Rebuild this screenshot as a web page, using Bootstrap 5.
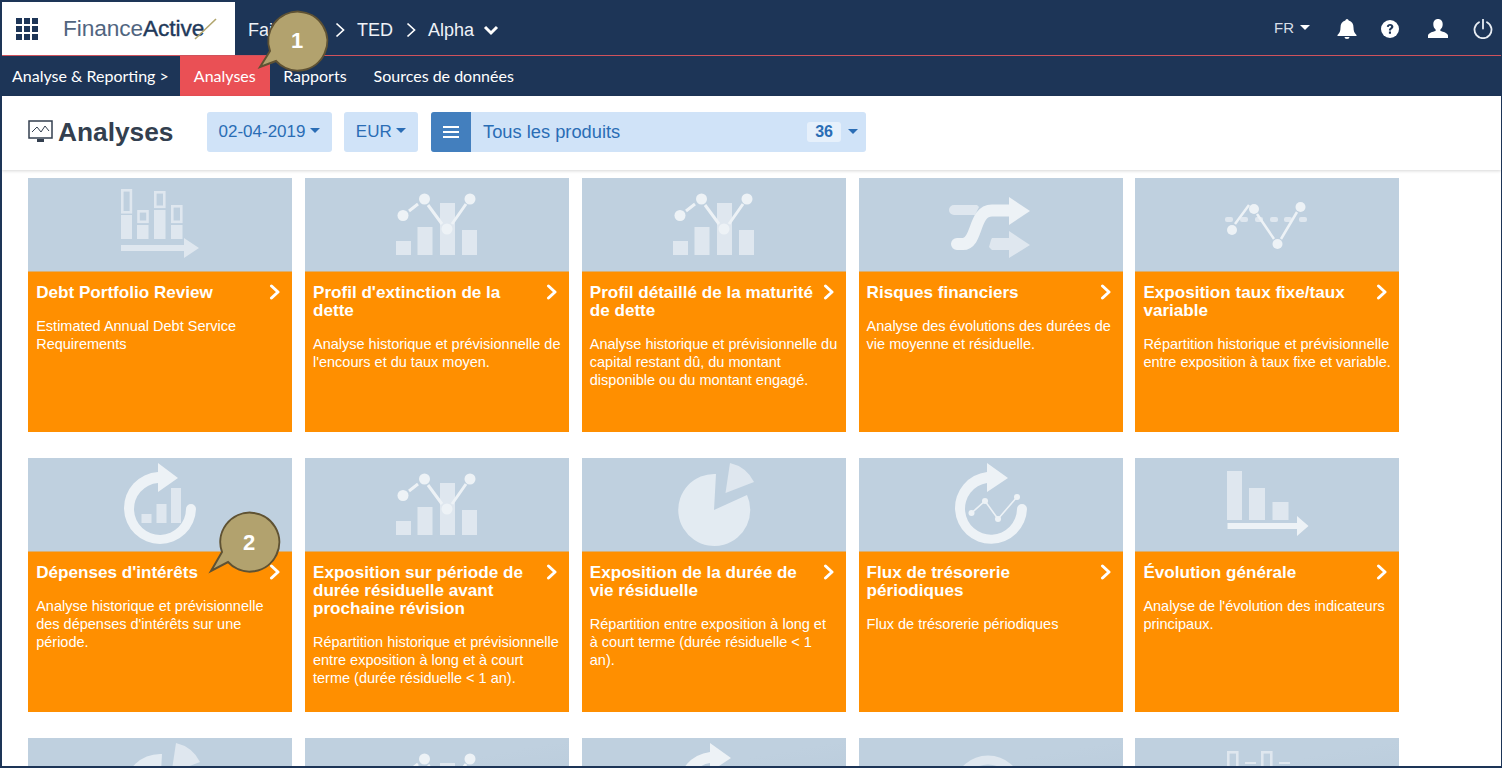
<!DOCTYPE html>
<html lang="fr">
<head>
    <meta charset="UTF-8">
    <meta name="viewport" content="width=device-width, initial-scale=1">
    <title>Analyses</title>
    <link href="https://cdn.jsdelivr.net/npm/bootstrap@5.3.0/dist/css/bootstrap.min.css" rel="stylesheet">
    <style>
        html, body { height: 768px; overflow: hidden; }
        body { font-family: "Liberation Sans", Arial, sans-serif; background: #fff; }
        .app-frame { position: relative; height: 768px; overflow: hidden; border: solid #1d3557; border-width: 2px 1px 2px 2px; }
        .top-strip { height: 54px; background: #1d3557; border-bottom: 1px solid #d0525c; }
        .logo-box { width: 233px; height: 53px; background: #fff; padding-left: 14px; }
        .apps-grid { display: grid; grid-template-columns: repeat(3, 6px); gap: 2px; width: 22px; }
        .apps-grid span { height: 6px; background: #1d3557; }
        .logo-text { margin-left: 25px; font-size: 22.7px; letter-spacing: -.1px; color: #51657f; white-space: nowrap; }
        .logo-text b { font-weight: 400; color: #22395a; -webkit-text-stroke: .4px #22395a; }
        .logo-slash { margin-left: -11px; }
        .crumbs { color: #eef2f7; font-size: 18px; margin-left: 13px; gap: 12.5px; padding-top: 3px; }
        .crumb-hidden { width: 36.5px; }
        .crumb-caret { margin-left: -4px; }
        .top-right { margin-left: auto; gap: 0; color: #d8dfe8; font-size: 15px; }
        .lang-pick { margin-right: 27px; }
        .lang-pick::after { content: ""; display: inline-block; margin-left: 6px; vertical-align: 3px; border-top: 5px solid #fff; border-left: 5px solid transparent; border-right: 5px solid transparent; }
        .top-icon { display: block; fill: #fff; }
        .gap-bell { margin-right: 24px; }
        .gap-help { margin-right: 29px; }
        .gap-user { margin-right: 25px; }
        .gap-power { margin-right: 8px; }
        .sub-strip { height: 40px; background: #1d3557; font-family: Lato, sans-serif; font-size: 16px; }
        .sub-title { color: #fff; padding: 0 11px 0 10px; }
        .sub-strip .nav-link { color: #fff; padding: 0 13.5px; height: 40px; line-height: 40px; }
        .sub-strip .nav-link.active { background: #ea5055; color: #fff; padding: 0 14px; }
        .page-head { height: 74px; padding: 16px 0 0 26px; background: #fff; box-shadow: 0 1px 3px rgba(0,0,0,.16); position: relative; }
        .page-title { font-size: 26.3px; font-weight: 700; line-height: 40px; color: #333f4f; margin: 0 33px 0 5px; }
        .pick-btn { height: 40px; background: #d0e3f8; color: #2a6db5; font-size: 17px; border: 0; border-radius: 3px; padding: 0 12px; }
        .pick-btn:hover { background: #d0e3f8; color: #2a6db5; }
        .date-btn { margin-right: 12px; }
        .product-pick { width: 435px; height: 40px; margin-left: 13px; background: #d0e3f8; border-radius: 3px; color: #2a6db5; font-size: 18.3px; }
        .burger { width: 40px; height: 40px; background: #437fbe; border-radius: 3px 0 0 3px; }
        .count-chip { background: #e6f0fb; font-size: 16px; font-weight: 700; border-radius: 3px; width: 34px; height: 20px; line-height: 20px; text-align: center; margin-right: 7px; }
        .tile-grid { display: grid; grid-template-columns: repeat(5, 264px); column-gap: 12.8px; row-gap: 26px; padding: 8px 0 0 26.2px; }
        .tile-pic { height: 93px; background: #bfd0df; }
        .tile-pic svg { display: block; width: 264px; height: 92px; }
        .tile-faded { background: linear-gradient(170deg, #bfd0df 35%, #b6c8d8 100%); }
        .tile-body { height: 161px; background: #ff8f00; color: #fff; padding: 12px 5px 0 8px; position: relative; border-top: 1px solid #d9b073; }
        .tile-name { font-size: 17.1px; font-weight: 700; line-height: 18px; margin: 0 25px 15px 0; }
        .tile-text { font-size: 14.5px; line-height: 18px; margin: 0; }
        .tile-arrow { position: absolute; top: 12px; right: 11px; }
        .ic-a { fill: #dfe7ef; }
        .ic-b { fill: #edf2f6; }
        .ic-p { fill: #e3ebf2; }
        .ic-s { fill: none; stroke: #edf2f6; }
        .ic-o { fill: none; stroke: #dfe7ef; }
        .callout { position: absolute; width: 82px; height: 72px; }
        .callout svg { display: block; }
        .callout span { position: absolute; width: 60px; height: 60px; line-height: 60px; text-align: center; font-weight: 700; font-size: 22px; color: #fff; }
        .callout-one { left: 250px; top: 1px; }
        .callout-one span { left: 15px; top: 8px; }
        .callout-two { left: 202px; top: 502px; }
        .callout-two span { left: 15px; top: 9px; }
    </style>
</head>
<body>
    <svg width="0" height="0" class="d-block">
        <symbol id="ic-stack" viewBox="0 0 264 92">
            <g class="ic-a">
                <rect x="93" y="37" width="11" height="24"/><rect x="109" y="47" width="11.5" height="14"/><rect x="126" y="32" width="11.5" height="29"/><rect x="143" y="47" width="11.5" height="14"/>
                <path d="M93 67h63v-7l15 10-15 10v-7H93z"/>
            </g>
            <g class="ic-o" stroke-width="2.6">
                <rect x="94.3" y="12.3" width="8.6" height="22"/><rect x="110.5" y="33.3" width="9" height="10.5"/><rect x="127.3" y="14.3" width="9" height="14.5"/><rect x="144.3" y="28.3" width="9" height="15.5"/>
            </g>
        </symbol>
        <symbol id="ic-linebars" viewBox="0 0 264 92">
            <g class="ic-a"><rect x="91" y="63" width="15" height="14"/><rect x="112.5" y="49" width="15" height="28"/><rect x="135" y="25" width="15" height="52"/><rect x="157" y="52" width="15" height="25"/></g>
            <g class="ic-b"><circle cx="98" cy="37.5" r="5.5"/><circle cx="119.5" cy="21" r="5.5"/><circle cx="142" cy="51" r="5.5"/><circle cx="165" cy="21" r="5.5"/></g>
            <path class="ic-s" stroke-width="3" d="M104 33l9-7M123 27l14 19M147 46l14-20"/>
        </symbol>
        <symbol id="ic-shuffle" viewBox="0 0 264 92">
            <path class="ic-a" d="M95 27h23l2 2-4 8H95a5 5 0 0 1 0-10zM133 60h17v-7l21 14-21 13v-8h-17l-3-3 2-7z"/>
            <path class="ic-s" stroke-width="12" stroke-linecap="round" d="M98 66h6c15 0 10-33.500 29-33.500h18"/>
            <path class="ic-b" d="M150 19l21 14-21 14z"/>
        </symbol>
        <symbol id="ic-dots" viewBox="0 0 264 92">
            <g class="ic-a"><rect x="90" y="39" width="8" height="5" rx="2"/><rect x="105" y="39" width="8" height="5" rx="2"/><rect x="120" y="39" width="8" height="5" rx="2"/><rect x="135" y="39" width="8" height="5" rx="2"/><rect x="149" y="39" width="8" height="5" rx="2"/><rect x="164" y="39" width="8" height="5" rx="2"/></g>
            <g class="ic-b"><circle cx="97" cy="52" r="5"/><circle cx="119" cy="31" r="5"/><circle cx="142.500" cy="66" r="5"/><circle cx="165.500" cy="29" r="5"/></g>
            <path class="ic-s" stroke-width="2.500" d="M100 46l14-19M122 36l17 25M146 61l16-27"/>
        </symbol>
        <symbol id="ic-cyclebars" viewBox="0 0 264 92">
            <path class="ic-b" d="M130 14v-9l20 15-20 14v-9a26 26 0 1 0 28 26 5 5 0 0 1 10 0 36 36 0 1 1-38-37z"/>
            <g class="ic-a"><rect x="113.500" y="56" width="10" height="9"/><rect x="128.500" y="46" width="10" height="19"/><rect x="143" y="30" width="10" height="35"/></g>
        </symbol>
        <symbol id="ic-pie" viewBox="0 0 264 92">
            <path class="ic-p" d="M132 52l2-36a36 36 0 1 0 31 21z"/>
            <path class="ic-a" d="M143.500 35l4.500-30a36 36 0 0 1 24 19z"/>
        </symbol>
        <symbol id="ic-cycleline" viewBox="0 0 264 92">
            <path class="ic-b" d="M128 14v-9l21 15-21 14v-9a26 26 0 1 0 30 26 5 5 0 0 1 10 0 36 36 0 1 1-40-37z"/>
            <path class="ic-s" stroke-width="1.600" d="M112.500 55l13.500-12 13 18 19-22"/>
            <g class="ic-b"><circle cx="112.500" cy="55" r="3"/><circle cx="126" cy="43" r="3"/><circle cx="139" cy="61" r="3"/><circle cx="158" cy="39" r="3"/></g>
        </symbol>
        <symbol id="ic-falling" viewBox="0 0 264 92">
            <g class="ic-a"><rect x="92" y="13" width="15" height="49"/><rect x="114" y="30" width="16" height="32"/><rect x="137.500" y="44" width="16" height="18"/></g>
            <path class="ic-b" d="M92.500 65H162v-7l11.500 10L162 78v-7H92.500z"/>
        </symbol>
        <symbol id="ic-clock" viewBox="0 0 264 92">
            <circle class="ic-o" cx="129" cy="52" r="30" stroke-width="9"/><path class="ic-a" d="M127.500 34h3v20h-3z"/>
        </symbol>
        <symbol id="ic-tall" viewBox="0 0 264 92">
            <g class="ic-o" stroke-width="2.600"><rect x="93.300" y="14.300" width="9" height="24"/><rect x="127.300" y="14.300" width="9" height="24"/></g>
            <path class="ic-a" d="M110 24h11v2h-11zM144 24h11v2h-11z"/>
        </symbol>
        <symbol id="chev-r" viewBox="0 0 12 16"><path d="M2.500 2l6.500 6-6.500 6" fill="none" stroke="#fff" stroke-width="3" stroke-linecap="round" stroke-linejoin="round"/></symbol>
    </svg>

    <div class="app-frame">
        <div class="top-strip d-flex align-items-center">
            <div class="logo-box d-flex align-items-center">
                <div class="apps-grid"><span></span><span></span><span></span><span></span><span></span><span></span><span></span><span></span><span></span></div>
                <div class="logo-text">Finance<b>Active</b></div>
                <svg width="24" height="24" viewBox="0 0 24 24" class="flex-shrink-0 logo-slash"><path d="M2 22L23 2" stroke="#b1a56d" stroke-width="1.600"/></svg>
            </div>
            <div class="crumbs d-flex align-items-center">
                <span>Fai</span><span class="crumb-hidden"></span>
                <svg width="10" height="16" viewBox="0 0 10 16"><path d="M1.500 1.500L8.500 8l-7 6.500" fill="none" stroke="#fff" stroke-width="1.700"/></svg>
                <span>TED</span>
                <svg width="10" height="16" viewBox="0 0 10 16"><path d="M1.500 1.500L8.500 8l-7 6.500" fill="none" stroke="#fff" stroke-width="1.700"/></svg>
                <span>Alpha</span>
                <svg width="16" height="12" viewBox="0 0 16 12" class="crumb-caret"><path d="M2 3l6 6 6-6" fill="none" stroke="#fff" stroke-width="3"/></svg>
            </div>
            <div class="top-right d-flex align-items-center">
                <span class="lang-pick">FR</span>
                <svg class="top-icon gap-bell" width="20" height="20" viewBox="0 0 20 20"><path d="M10 0a2 2 0 0 1 1.700 1.600C15 2.500 16.500 5 16.500 8.500c0 4 1 5.500 3 7.500v1H.5v-1c2-2 3-3.500 3-7.500C3.500 5 5 2.500 8.300 1.600A2 2 0 0 1 10 0zM7.500 18h5a2.500 2 0 0 1-5 0z"/></svg>
                <svg class="top-icon gap-help" width="18" height="18" viewBox="0 0 18 18"><circle cx="9" cy="9" r="9"/><path d="M5.800 6.800C6 4.800 7.400 4 9.100 4c1.900 0 3.300 1.100 3.300 2.800 0 2.200-2.400 2.200-2.400 3.700H7.900c0-2.500 2.200-2.600 2.200-3.700 0-.6-.4-1-1.100-1-.8 0-1.100.5-1.200 1.100zM7.900 11.500H10v2.200H7.900z" fill="#1d3557"/></svg>
                <svg class="top-icon gap-user" width="20" height="20" viewBox="0 0 20 20"><path d="M10 0c3 0 4.700 2.200 4.700 5.200 0 2.300-1 4.300-2.300 5.300v1.500c3 .8 7 2 7.600 4.500V19H0v-2.500c.6-2.500 4.600-3.700 7.600-4.500v-1.500C6.300 9.500 5.300 7.500 5.300 5.200 5.300 2.200 7 0 10 0z"/></svg>
                <svg width="20" height="20" viewBox="0 0 20 20" class="d-block gap-power"><path d="M6 3.200a8.500 8.500 0 1 0 8 0M10 .5v9" fill="none" stroke="#e8edf3" stroke-width="1.800" stroke-linecap="round"/></svg>
            </div>
        </div>

        <div class="sub-strip d-flex align-items-center">
            <span class="sub-title">Analyse &amp; Reporting &gt;</span>
            <ul class="nav">
                <li class="nav-item"><a class="nav-link active" href="#">Analyses</a></li>
                <li class="nav-item"><a class="nav-link" href="#">Rapports</a></li>
                <li class="nav-item"><a class="nav-link" href="#">Sources de données</a></li>
            </ul>
        </div>

        <div class="page-head d-flex align-items-start">
            <svg width="25" height="26" viewBox="0 0 25 26" class="mt-2 flex-shrink-0"><rect x="1" y="1" width="23" height="17" fill="none" stroke="#333f4f" stroke-width="1.500"/><path d="M4 12l5-5 4 5 4-6 4 5" fill="none" stroke="#333f4f"/><path d="M9 19h7v3H9z" fill="#333f4f"/></svg>
            <h1 class="page-title">Analyses</h1>
            <button class="btn pick-btn date-btn dropdown-toggle" type="button">02-04-2019</button>
            <button class="btn pick-btn dropdown-toggle" type="button">EUR</button>
            <div class="product-pick d-flex align-items-center">
                <div class="burger d-flex align-items-center justify-content-center flex-shrink-0">
                    <svg width="16" height="14" viewBox="0 0 16 14"><path d="M0 1h16v2H0zM0 6h16v2H0zM0 11h16v2H0z" fill="#fff"/></svg>
                </div>
                <span class="ms-2 flex-grow-1 ps-1">Tous les produits</span>
                <span class="count-chip">36</span>
                <span class="dropdown-toggle me-1 pe-1"></span>
            </div>
        </div>

        <div class="tile-grid">
            <div class="card rounded-0 border-0"><div class="tile-pic"><svg><use href="#ic-stack"/></svg></div><div class="tile-body"><h5 class="tile-name">Debt Portfolio Review</h5><svg class="tile-arrow" width="12" height="16"><use href="#chev-r"/></svg><p class="tile-text">Estimated Annual Debt Service Requirements</p></div></div>
            <div class="card rounded-0 border-0"><div class="tile-pic"><svg><use href="#ic-linebars"/></svg></div><div class="tile-body"><h5 class="tile-name">Profil d'extinction de la dette</h5><svg class="tile-arrow" width="12" height="16"><use href="#chev-r"/></svg><p class="tile-text">Analyse historique et prévisionnelle de l'encours et du taux moyen.</p></div></div>
            <div class="card rounded-0 border-0"><div class="tile-pic"><svg><use href="#ic-linebars"/></svg></div><div class="tile-body"><h5 class="tile-name">Profil détaillé de la maturité de dette</h5><svg class="tile-arrow" width="12" height="16"><use href="#chev-r"/></svg><p class="tile-text">Analyse historique et prévisionnelle du capital restant dû, du montant disponible ou du montant engagé.</p></div></div>
            <div class="card rounded-0 border-0"><div class="tile-pic"><svg><use href="#ic-shuffle"/></svg></div><div class="tile-body"><h5 class="tile-name">Risques financiers</h5><svg class="tile-arrow" width="12" height="16"><use href="#chev-r"/></svg><p class="tile-text">Analyse des évolutions des durées de vie moyenne et résiduelle.</p></div></div>
            <div class="card rounded-0 border-0"><div class="tile-pic"><svg><use href="#ic-dots"/></svg></div><div class="tile-body"><h5 class="tile-name">Exposition taux fixe/taux variable</h5><svg class="tile-arrow" width="12" height="16"><use href="#chev-r"/></svg><p class="tile-text">Répartition historique et prévisionnelle entre exposition à taux fixe et variable.</p></div></div>

            <div class="card rounded-0 border-0"><div class="tile-pic"><svg><use href="#ic-cyclebars"/></svg></div><div class="tile-body"><h5 class="tile-name">Dépenses d'intérêts</h5><svg class="tile-arrow" width="12" height="16"><use href="#chev-r"/></svg><p class="tile-text">Analyse historique et prévisionnelle des dépenses d'intérêts sur une période.</p></div></div>
            <div class="card rounded-0 border-0"><div class="tile-pic"><svg><use href="#ic-linebars"/></svg></div><div class="tile-body"><h5 class="tile-name">Exposition sur période de durée résiduelle avant prochaine révision</h5><svg class="tile-arrow" width="12" height="16"><use href="#chev-r"/></svg><p class="tile-text">Répartition historique et prévisionnelle entre exposition à long et à court terme (durée résiduelle &lt; 1 an).</p></div></div>
            <div class="card rounded-0 border-0"><div class="tile-pic"><svg><use href="#ic-pie"/></svg></div><div class="tile-body"><h5 class="tile-name">Exposition de la durée de vie résiduelle</h5><svg class="tile-arrow" width="12" height="16"><use href="#chev-r"/></svg><p class="tile-text">Répartition entre exposition à long et<br>à court terme (durée résiduelle &lt; 1<br>an).</p></div></div>
            <div class="card rounded-0 border-0"><div class="tile-pic"><svg><use href="#ic-cycleline"/></svg></div><div class="tile-body"><h5 class="tile-name">Flux de trésorerie périodiques</h5><svg class="tile-arrow" width="12" height="16"><use href="#chev-r"/></svg><p class="tile-text">Flux de trésorerie périodiques</p></div></div>
            <div class="card rounded-0 border-0"><div class="tile-pic"><svg><use href="#ic-falling"/></svg></div><div class="tile-body"><h5 class="tile-name">Évolution générale</h5><svg class="tile-arrow" width="12" height="16"><use href="#chev-r"/></svg><p class="tile-text">Analyse de l'évolution des indicateurs principaux.</p></div></div>

            <div class="card rounded-0 border-0"><div class="tile-pic"><svg><use href="#ic-pie"/></svg></div></div>
            <div class="card rounded-0 border-0"><div class="tile-pic tile-faded"><svg><use href="#ic-linebars"/></svg></div></div>
            <div class="card rounded-0 border-0"><div class="tile-pic tile-faded"><svg><use href="#ic-cycleline"/></svg></div></div>
            <div class="card rounded-0 border-0"><div class="tile-pic tile-faded"><svg><use href="#ic-clock"/></svg></div></div>
            <div class="card rounded-0 border-0"><div class="tile-pic tile-faded"><svg><use href="#ic-tall"/></svg></div></div>
        </div>

        <div class="callout callout-one">
            <svg width="82" height="72" viewBox="0 0 82 72"><path d="M18 48L8 64l16-6A29.500 29.500 0 1 0 18 48z" fill="#b2a26e" stroke="#5f5233" stroke-width="2"/></svg>
            <span>1</span>
        </div>
        <div class="callout callout-two">
            <svg width="82" height="72" viewBox="0 0 82 72"><path d="M18 48L7 67l17-9A29.500 29.500 0 1 0 18 48z" fill="#b2a26e" stroke="#5f5233" stroke-width="2"/></svg>
            <span>2</span>
        </div>
    </div>

    <script src="https://cdn.jsdelivr.net/npm/bootstrap@5.3.0/dist/js/bootstrap.bundle.min.js"></script>
</body>
</html>
